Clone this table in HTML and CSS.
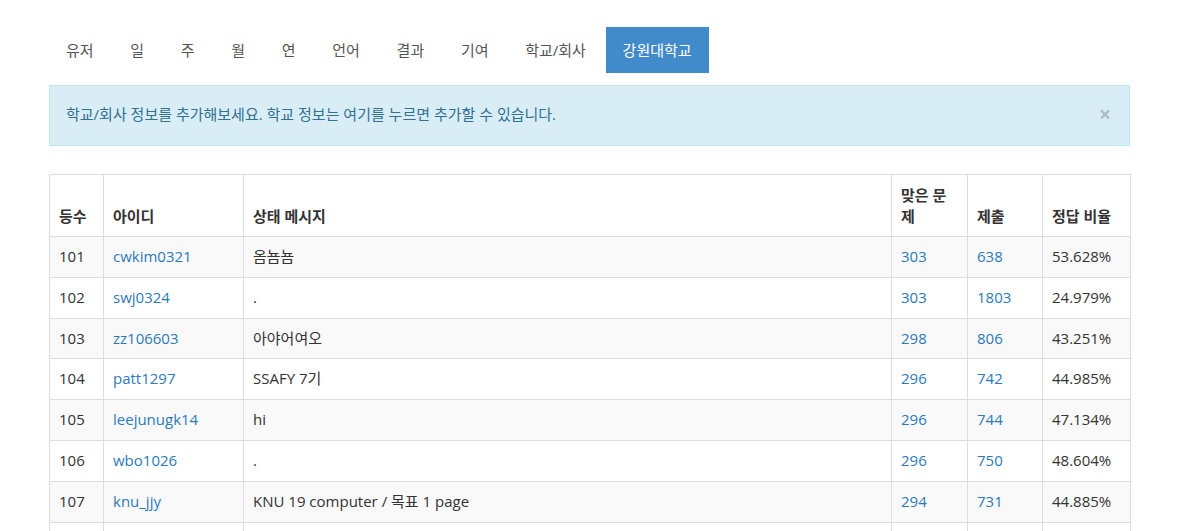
FILE: index.html
```html
<!DOCTYPE html>
<html lang="ko">
<head>
<meta charset="utf-8">
<title>랭킹</title>
<link rel="stylesheet" href="styles.css">
</head>
<body>
<div class="container">
  <ul class="nav">
    <li class="tab">유저</li>
    <li class="tab">일</li>
    <li class="tab">주</li>
    <li class="tab">월</li>
    <li class="tab">연</li>
    <li class="tab">언어</li>
    <li class="tab">결과</li>
    <li class="tab">기여</li>
    <li class="tab">학교/회사</li>
    <li class="tab active">강원대학교</li>
  </ul>
  <div class="alert">
    <span>학교/회사 정보를 추가해보세요. 학교 정보는 여기를 누르면 추가할 수 있습니다.</span>
    <span class="close">×</span>
  </div>
  <table class="ranklist">
    <colgroup>
      <col class="c-rank"><col class="c-id"><col class="c-msg"><col class="c-solved"><col class="c-sub"><col class="c-ratio">
    </colgroup>
    <thead>
      <tr><th>등수</th><th>아이디</th><th>상태 메시지</th><th>맞은 문제</th><th>제출</th><th>정답 비율</th></tr>
    </thead>
    <tbody>
      <tr><td>101</td><td><a>cwkim0321</a></td><td>옴뇸뇸</td><td><a>303</a></td><td><a>638</a></td><td>53.628%</td></tr>
      <tr><td>102</td><td><a>swj0324</a></td><td>.</td><td><a>303</a></td><td><a>1803</a></td><td>24.979%</td></tr>
      <tr><td>103</td><td><a>zz106603</a></td><td>아야어여오</td><td><a>298</a></td><td><a>806</a></td><td>43.251%</td></tr>
      <tr><td>104</td><td><a>patt1297</a></td><td>SSAFY 7기</td><td><a>296</a></td><td><a>742</a></td><td>44.985%</td></tr>
      <tr><td>105</td><td><a>leejunugk14</a></td><td>hi</td><td><a>296</a></td><td><a>744</a></td><td>47.134%</td></tr>
      <tr><td>106</td><td><a>wbo1026</a></td><td>.</td><td><a>296</a></td><td><a>750</a></td><td>48.604%</td></tr>
      <tr><td>107</td><td><a>knu_jjy</a></td><td>KNU 19 computer / 목표 1 page</td><td><a>294</a></td><td><a>731</a></td><td>44.885%</td></tr>
      <tr class="blank"><td>&nbsp;</td><td>&nbsp;</td><td>&nbsp;</td><td>&nbsp;</td><td>&nbsp;</td><td>&nbsp;</td></tr>
    </tbody>
  </table>
</div>
</body>
</html>
```
FILE: styles.css
```css
html, body {
  margin: 0;
  padding: 0;
  background: #fff;
}
body {
  font-family: "Open Sans", "Noto Sans CJK KR", sans-serif;
  font-size: 15px;
  line-height: 20px;
  color: #333;
}
.container {
  width: 1081px;
  margin-left: 49px;
  padding-top: 27px;
}
.nav {
  list-style: none;
  margin: 0 0 12px 0;
  padding: 0;
  display: flex;
  gap: 2.7px;
}
.tab {
  height: 45px;
  padding: 0 17px 1px;
  display: flex;
  align-items: center;
  color: #555;
}
.tab.active {
  background: #428bca;
  color: #fff;
}
.alert {
  display: flex;
  justify-content: space-between;
  align-items: center;
  padding: 18px 16px 21px;
  background: #d9edf7;
  border: 1px solid #bce8f1;
  color: #31708f;
  margin-bottom: 28px;
}
.close {
  font-size: 21px;
  font-weight: 700;
  color: #000;
  opacity: 0.2;
  margin-right: 2px;
  line-height: 20px;
}
.ranklist {
  width: 1081px;
  border-collapse: collapse;
  table-layout: fixed;
  border: 1px solid #ddd;
}
.c-rank { width: 54px; }
.c-id { width: 140px; }
.c-msg { width: 648px; }
.c-solved { width: 76px; }
.c-sub { width: 75px; }
.c-ratio { width: 88px; }
.ranklist th, .ranklist td {
  border: 1px solid #ddd;
  padding: 10px 8px 10px 9px;
  text-align: left;
}
.ranklist th {
  vertical-align: bottom;
  font-weight: 700;
  line-height: 20.5px;
}
.ranklist td {
  vertical-align: middle;
  line-height: 19.8px;
  white-space: nowrap;
  overflow: hidden;
}
.ranklist tbody tr:nth-child(odd) {
  background: #f9f9f9;
}
.ranklist a {
  color: #2b7bb9;
  text-decoration: none;
}
```
